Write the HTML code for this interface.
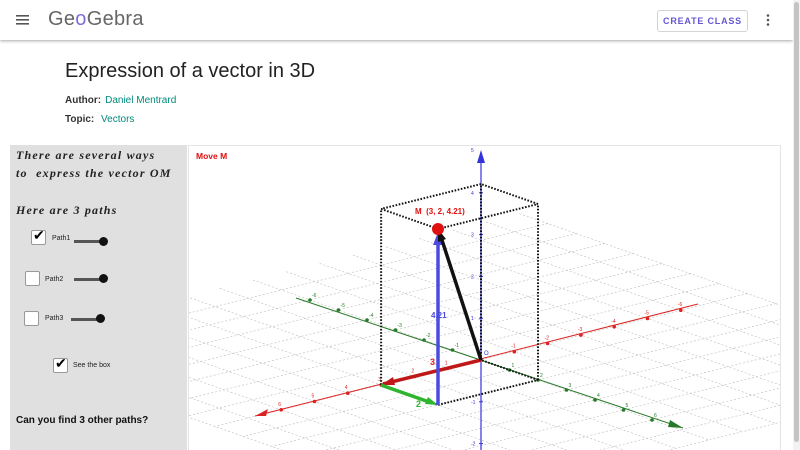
<!DOCTYPE html>
<html><head><meta charset="utf-8"><style>
*{margin:0;padding:0;box-sizing:border-box}
html,body{width:800px;height:450px;overflow:hidden}
body{background:#fff;font-family:"Liberation Sans",sans-serif;position:relative}
.hdr{position:absolute;left:0;top:0;width:793px;height:40px;background:#fff;box-shadow:0 1px 3px rgba(0,0,0,.35)}
.sb{position:absolute;right:0;top:0;width:7px;height:450px;background:#f2f2f2}
.sb div{position:absolute;left:1px;top:2px;width:5px;height:440px;background:#c4c4c4;border-radius:3px}
.btn{position:absolute;left:657px;top:10px;width:91px;height:22px;border:1px solid #d4d4d4;border-radius:3px;color:#6557d2;font-size:9px;font-weight:bold;letter-spacing:.8px;text-align:center;line-height:21px}
h1{position:absolute;left:65px;top:60px;font-size:20px;font-weight:normal;color:#222}
.meta{position:absolute;left:65px;font-size:10px;color:#333}
.meta b{font-weight:bold;color:#333;margin-right:4px}
.meta span{color:#00897b}
.panel{position:absolute;left:10px;top:145px;width:177px;height:305px;background:#e0e0e0}
.it{position:absolute;font-family:"Liberation Serif",serif;font-style:italic;font-weight:bold;font-size:12px;letter-spacing:1.2px;color:#222}
.cb{position:absolute;width:15px;height:15px;background:#fff;border:1px solid #999;border-radius:2px}
.lbl{position:absolute;font-size:7px;color:#222}
.sl{position:absolute;height:3px;background:#555}
.kn{position:absolute;width:9px;height:9px;border-radius:50%;background:#111}
.gfx{position:absolute;left:188px;top:145px;width:593px;height:305px;border:1px solid #e4e4e4;border-bottom:none;background:#fff}
</style></head><body>
<div class="hdr">
<svg style="position:absolute;left:16px;top:15px" width="13" height="10"><rect y="0" width="13" height="1.6" fill="#555"/><rect y="4" width="13" height="1.6" fill="#555"/><rect y="8" width="13" height="1.6" fill="#555"/></svg>
<div style="position:absolute;left:48px;top:8px;font-size:20px;color:#666;letter-spacing:.3px">Ge<span style="color:#7c6fd8">o</span>Gebra</div>
<div class="btn">CREATE CLASS</div>
<svg style="position:absolute;left:766px;top:14px" width="4" height="12"><circle cx="2" cy="1.5" r="1.3" fill="#555"/><circle cx="2" cy="6" r="1.3" fill="#555"/><circle cx="2" cy="10.5" r="1.3" fill="#555"/></svg>
</div>
<div class="sb"><div></div></div>
<h1>Expression of a vector in 3D</h1>
<div class="meta" style="top:95px"><b>Author:</b><span>Daniel Mentrard</span></div>
<div class="meta" style="top:114px"><b>Topic:</b> <span>Vectors</span></div>
<div class="panel"></div>
<div class="it" style="left:16px;top:148px">There are several ways</div>
<div class="it" style="left:16px;top:166px">to&nbsp; express the vector OM&#8407;</div>
<div class="it" style="left:16px;top:203px">Here are 3 paths</div>
<div class="cb" style="left:31px;top:230px"></div><div style="position:absolute;left:33px;top:227px;font-size:14px">✔</div>
<div class="lbl" style="left:52px;top:235px">Path1</div>
<div class="sl" style="left:74px;top:240px;width:30px"></div><div class="kn" style="left:99px;top:237px"></div>
<div class="cb" style="left:25px;top:271px"></div>
<div class="lbl" style="left:45px;top:276px">Path2</div>
<div class="sl" style="left:74px;top:278px;width:30px"></div><div class="kn" style="left:99px;top:274px"></div>
<div class="cb" style="left:24px;top:311px"></div>
<div class="lbl" style="left:45px;top:315px">Path3</div>
<div class="sl" style="left:71px;top:318px;width:30px"></div><div class="kn" style="left:96px;top:314px"></div>
<div class="cb" style="left:53px;top:358px"></div><div style="position:absolute;left:55px;top:355px;font-size:14px">✔</div>
<div class="lbl" style="left:73px;top:362px">See the box</div>
<div style="position:absolute;left:16px;top:415px;font-size:10px;font-weight:bold;color:#111">Can you find 3 other paths?</div>
<div class="gfx"></div>
<svg id="g" style="position:absolute;left:0;top:0" width="800" height="450"></svg>
<script>
var O=[481,360],X=[-33.3,8.3],Y=[28.5,10],Z=41.8;
function P(a,b,c){return [O[0]+a*X[0]+b*Y[0],O[1]+a*X[1]+b*Y[1]-c*Z];}
var s='<clipPath id="c"><rect x="189" y="146" width="591" height="304"/></clipPath><g clip-path="url(#c)">';
function L(p,q,st){s+='<line x1="'+p[0]+'" y1="'+p[1]+'" x2="'+q[0]+'" y2="'+q[1]+'" '+st+'/>';}
var gs='stroke="#bbb" stroke-width="0.6" stroke-dasharray="2,2"';
for(var j=-7;j<=8;j++)L(P(-8,j,0),P(8,j,0),gs);
for(var i=-8;i<=8;i++)L(P(i,-8,0),P(i,8,0),gs);
L([255,416],[698,304],'stroke="#d22" stroke-width="1"');
L([296,298],[683,428],'stroke="#277a27" stroke-width="1"');
L([481,450],[481,156],'stroke="#3333dd" stroke-width="1.2"');
s+='<polygon points="255,416 268,409 266,416" fill="#d22"/><polygon points="683,428 670,420 668,427" fill="#277a27"/><polygon points="481,150 477,163 485,163" fill="#3333dd"/>';
for(var i=-6;i<=6;i++){if(!i)continue;var p=P(i,0,0);s+='<circle cx="'+p[0]+'" cy="'+p[1]+'" r="1.8" fill="#d22"/><text x="'+(p[0]-3)+'" y="'+(p[1]-4)+'" font-size="5" fill="#d22">'+i+'</text>';}
for(var j=-6;j<=6;j++){if(!j)continue;var p=P(0,j,0);s+='<circle cx="'+p[0]+'" cy="'+p[1]+'" r="1.8" fill="#277a27"/><text x="'+(p[0]+2)+'" y="'+(p[1]-3)+'" font-size="5" fill="#277a27">'+j+'</text>';}
for(var k=-2;k<=4;k++){if(!k)continue;var p=P(0,0,k);s+='<line x1="479" y1="'+p[1]+'" x2="483" y2="'+p[1]+'" stroke="#33d"/><text x="471" y="'+(p[1]+2)+'" font-size="5" fill="#33d">'+k+'</text>';}
s+='<text x="471" y="152" font-size="5" fill="#33d">5</text>';
var ds='stroke="#111" stroke-width="2" stroke-dasharray="1.6,1.6"';
var b=[P(0,0,0),P(3,0,0),P(3,2,0),P(0,2,0)],t=[P(0,0,4.21),P(3,0,4.21),P(3,2,4.21),P(0,2,4.21)];
for(var i=0;i<4;i++){L(t[i],t[(i+1)%4],ds);L(b[i],b[(i+1)%4],ds);if(i!=2)L(b[i],t[i],ds);}
L(P(0,0,0),[383,384],'stroke="#c01818" stroke-width="3.5"');
s+='<polygon points="381,385 393,377 395,385" fill="#c01818"/>';
L([381,385],[432,403],'stroke="#2db52d" stroke-width="3.5"');
s+='<polygon points="438,405 425,404 428,397" fill="#2db52d"/>';
L([438,405],[438,240],'stroke="#4b4be0" stroke-width="3.5"');
s+='<polygon points="438,232 433,245 443,245" fill="#4b4be0"/>';
L(O,[440,234],'stroke="#111" stroke-width="3.5"');
s+='<polygon points="438,229 438,242 446,239" fill="#111"/>';
s+='<circle cx="438" cy="229" r="6" fill="#e01010"/>';
s+='<text x="415" y="214" font-size="8" font-weight="bold" fill="#e01010">M&#160; (3, 2, 4.21)</text>';
s+='<text x="196" y="159" font-size="8.5" font-weight="bold" fill="#e01010">Move M</text>';
s+='<text x="431" y="318" font-size="8" font-weight="bold" fill="#4b4be0">4.21</text>';
s+='<text x="430" y="365" font-size="9" font-weight="bold" fill="#d22">3</text>';
s+='<text x="416" y="407" font-size="9" font-weight="bold" fill="#2db52d">2</text>';
s+='<text x="484" y="355" font-size="6" fill="#33d">O</text></g>';
document.getElementById('g').innerHTML=s;
</script>
</body></html>
